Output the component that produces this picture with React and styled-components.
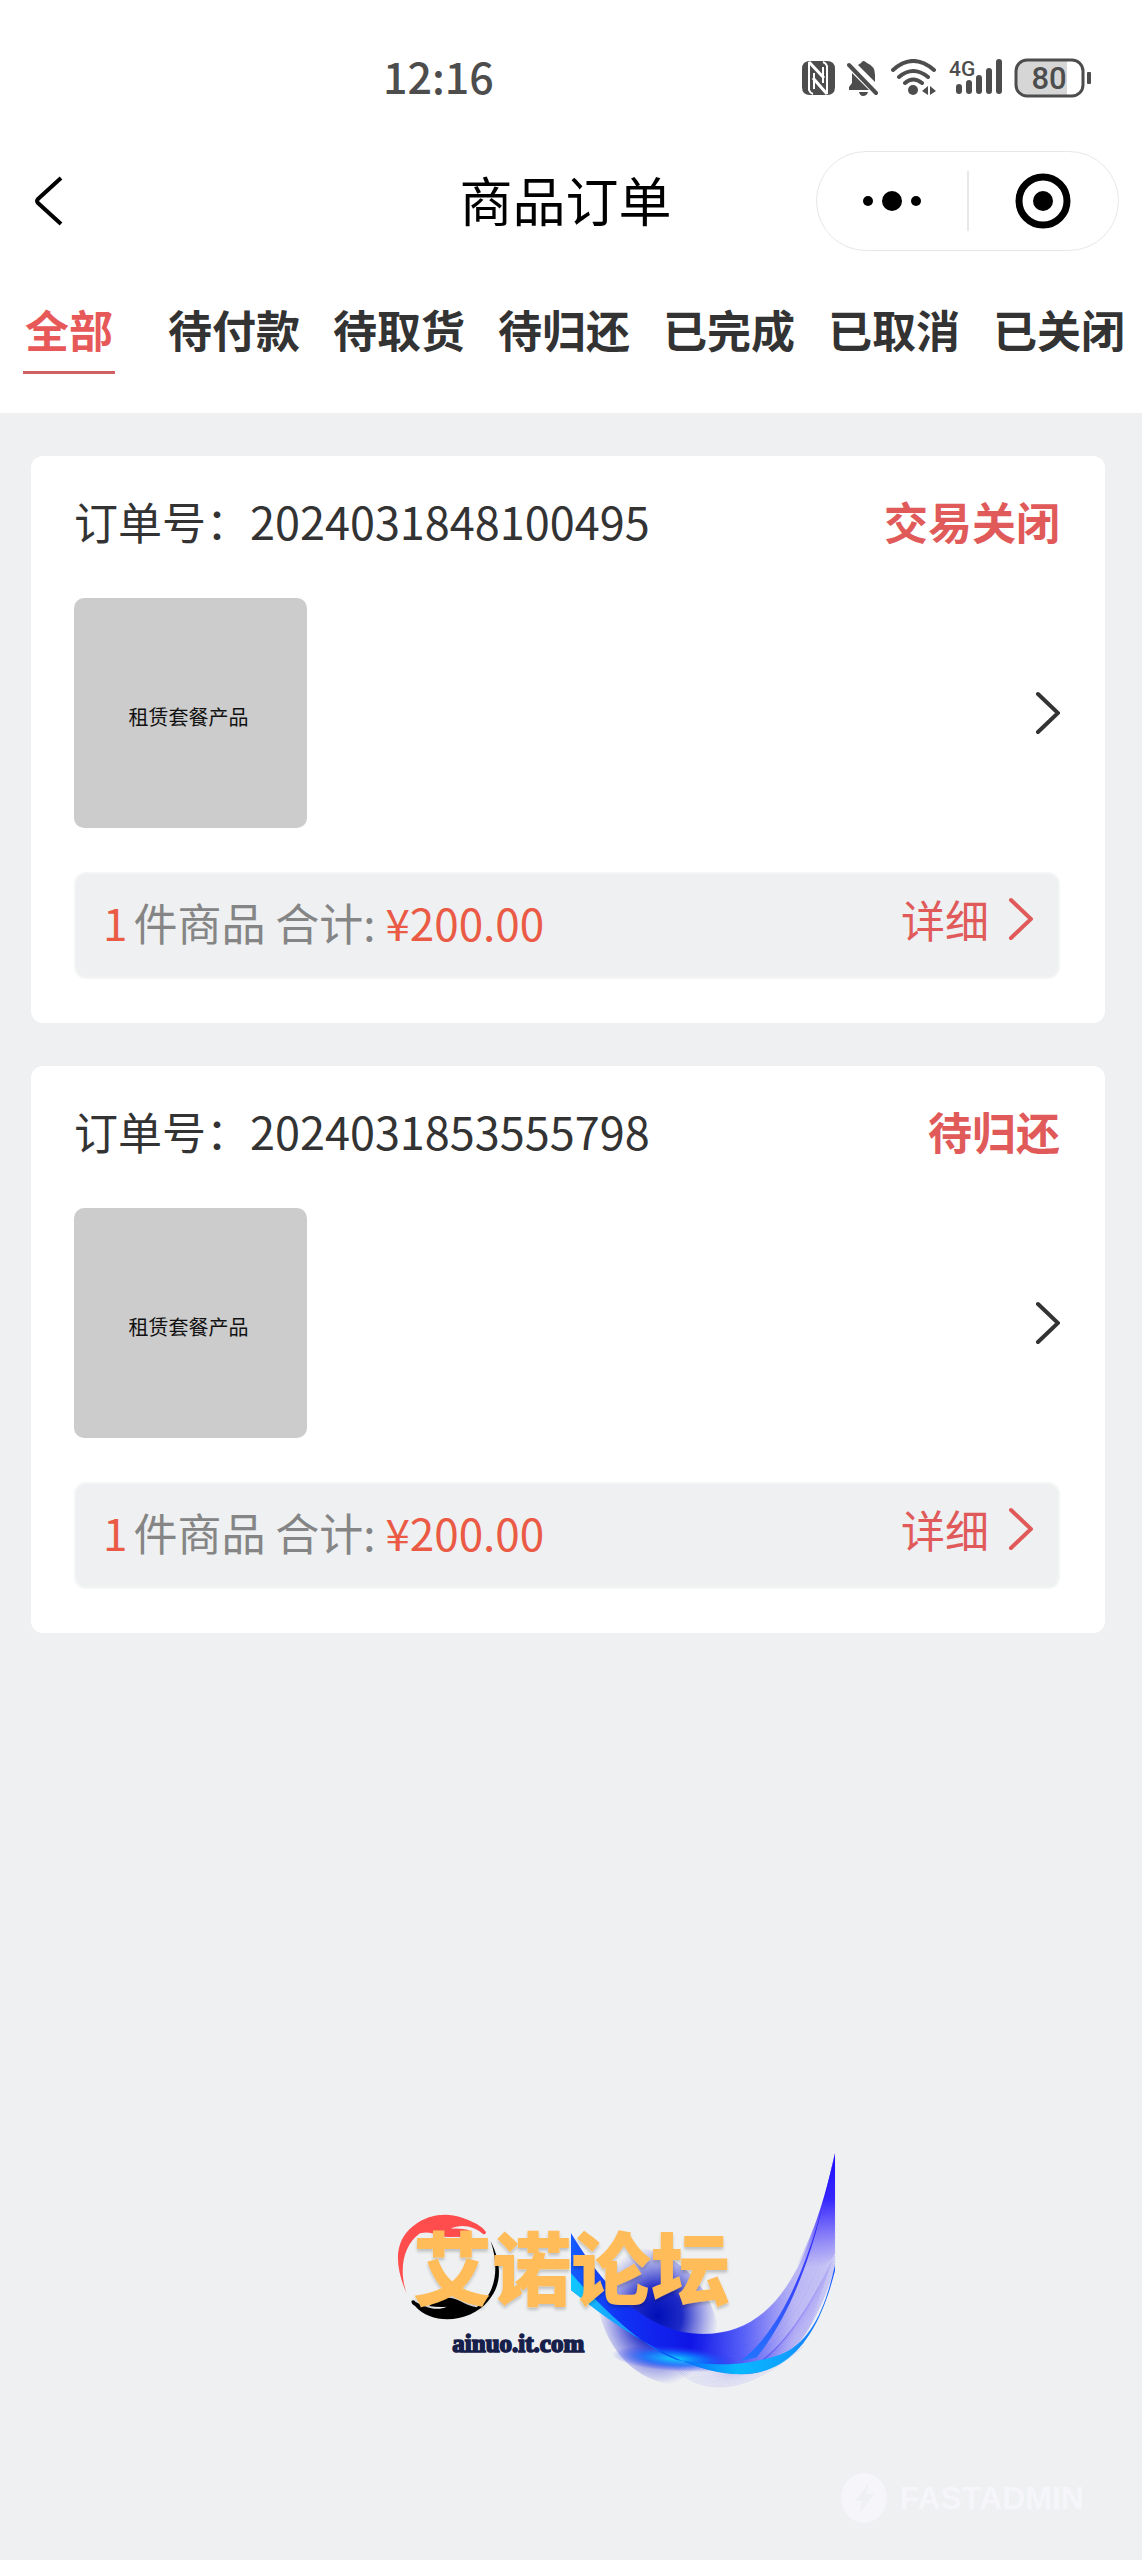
import { Fragment } from "react"
import styled, { createGlobalStyle } from "styled-components"

const GlobalStyle = createGlobalStyle`
    *{
        box-sizing: border-box;
    }
    body{
        margin: 0;
        background-color: #eef0f2;
        color: #333333;
        font-family: "Noto Sans CJK SC", "Noto Sans", sans-serif;
    }
    button{
        padding: 0;
        border: none;
        background: none;
        color: inherit;
        font: inherit;
        cursor: pointer;
    }
`
const Page = styled.div`
    display: flex;
    flex-direction: column;
    min-height: 100vh;
`
const Header = styled.header`
    background-color: #ffffff;
    border-bottom: 2px solid #f0f0f1;
`
const StatusBar = styled.div`
    display: flex;
    align-items: center;
    justify-content: space-between;
    height: 151px;
    padding: 4px 50px 0 383px;
    color: #4d4d4d;
`
const Time = styled.time`
    padding-bottom: 6px;
    font-size: 43px;
    line-height: 50px;
    font-weight: 500;
`
const StatusIcons = styled.div`
    display: flex;
    align-items: center;
    gap: 12px;
`
const NavBar = styled.div`
    display: grid;
    grid-template-columns: 1fr auto 1fr;
    align-items: center;
    padding: 0 23px 0 12px;
`
const BackButton = styled.button`
    display: flex;
    justify-self: start;
    padding: 0 20px;
`
const Title = styled.h1`
    margin: 0;
    padding-bottom: 4px;
    font-size: 53px;
    line-height: 60px;
    font-weight: 400;
    color: #000000;
`
const Capsule = styled.div`
    display: flex;
    align-items: center;
    justify-self: end;
    width: 303px;
    height: 100px;
    border: 1px solid #e6e8e8;
    border-radius: 50px;
`
const CapsuleButton = styled.button`
    display: flex;
    flex: 1;
    align-items: center;
    justify-content: center;
    height: 60px;
    & + &{
        border-left: 2px solid #e8e8e8;
    }
`
const Tabs = styled.nav`
    display: flex;
    gap: 33px;
    padding: 53px 16px 39px 23px;
    overflow: hidden;
`
const Tab = styled.button`
    flex: none;
    padding: 0 ${props => props.$active ? "2px" : "0"} 17px;
    margin-right: ${props => props.$active ? "20px" : "0"};
    border-bottom: 3px solid ${props => props.$active ? "#cf6163" : "transparent"};
    color: ${props => props.$active ? "#e75959" : "#333333"};
    font-size: 44px;
    line-height: 50px;
    font-weight: 700;
`
const Orders = styled.main`
    display: flex;
    flex-direction: column;
    gap: 43px;
    padding: 41px 37px 0 31px;
`
const Card = styled.article`
    padding: 40px 45px 44px 43px;
    background-color: #ffffff;
    border-radius: 12px;
`
const CardHead = styled.div`
    display: flex;
    justify-content: space-between;
    margin-bottom: 52px;
    font-size: 44px;
    line-height: 50px;
`
const OrderNumber = styled.span`
    font-size: 45px;
`
const State = styled.strong`
    color: #e05a5a;
    font-weight: 700;
`
const Product = styled.button`
    display: flex;
    align-items: center;
    justify-content: space-between;
    width: 100%;
    margin-bottom: 44px;
`
const Thumb = styled.span`
    display: flex;
    align-items: center;
    justify-content: center;
    width: 233px;
    height: 230px;
    padding: 8px 4px 0 0;
    border-radius: 10px;
    background-color: #cccccc;
    color: #111111;
    font-size: 20px;
    line-height: 24px;
`
const Summary = styled.div`
    display: flex;
    align-items: center;
    justify-content: space-between;
    height: 107px;
    padding: 0 25px 8px 27px;
    border: 2px solid #f4f6f6;
    border-radius: 12px;
    background-color: #eef0f2;
    color: #858585;
    font-size: 44px;
    line-height: 50px;
`
const Accent = styled.span`
    margin-right: ${props => props.$spaced ? "6px" : "0"};
    color: #ea5a44;
`
const Detail = styled.a`
    display: flex;
    align-items: center;
    gap: 18px;
    padding-bottom: 6px;
    color: #e05a5a;
    text-decoration: none;
`
const Footer = styled.footer`
    display: flex;
    flex: 1;
    flex-direction: column;
    justify-content: flex-end;
    padding: 80px 58px 36px;
`
const Forum = styled.div`
    display: flex;
    justify-content: center;
    padding-left: 98px;
    margin-bottom: 62px;
`
const Watermark = styled.div`
    display: flex;
    align-items: center;
    justify-content: flex-end;
    gap: 12px;
    color: #f5f5fa;
    font-family: "Liberation Sans", Arial, sans-serif;
    font-size: 32px;
    line-height: 52px;
    font-weight: 700;
`

const tabs = ["全部", "待付款", "待取货", "待归还", "已完成", "已取消", "已关闭"]

const orders = [
    { number: "2024031848100495", state: "交易关闭" },
    { number: "2024031853555798", state: "待归还" },
]

const Chevron = () => (
    <svg width="26" height="44" viewBox="0 0 26 44" fill="none" stroke="currentColor" strokeWidth="4" aria-hidden="true">
        <path d="M4 3 24 22 4 41" strokeLinecap="round"/>
    </svg>
)

const NfcIcon = () => (
    <svg width="33" height="34" viewBox="0 0 33 34" aria-label="NFC">
        <path fill="#4d4d4d" d="M8 0H25Q33 0 33 8V26Q33 34 25 34H8Q0 34 0 26V8Q0 0 8 0Z"/>
        <path fill="none" stroke="#fff" strokeWidth="2" d="M7 1V29Q8 32 11 33M25 33V5Q24 2 21 1"/>
        <path fill="none" stroke="#fff" strokeWidth="3" d="M7 1 22 17M11 17 25 33"/>
        <path fill="none" stroke="#fff" strokeWidth="2" d="M12 12V28M21 6V22"/>
    </svg>
)

const MutedIcon = () => (
    <svg width="32" height="36" viewBox="0 0 32 36" fill="#4d4d4d" aria-label="静音">
        <path d="M5 13 22 30H2V27L5 23ZM11 5 14 3Q16-1 20 3 28 6 28 15V22ZM12 32H21Q20 36 16 36 13 36 12 32Z"/>
        <path fill="none" stroke="#4d4d4d" strokeWidth="4" strokeLinecap="round" d="M2 5 29 33"/>
    </svg>
)

const WifiIcon = () => (
    <svg width="46" height="37" viewBox="0 0 46 37" fill="none" stroke="#4d4d4d" strokeWidth="4" strokeLinecap="round" aria-label="Wi-Fi">
        <path d="M2 11Q22-7 43 11M8 18Q22 6 37 18M14 24Q22 17 31 24"/>
        <circle cx="22" cy="31" r="5" fill="#4d4d4d" stroke="none"/>
        <path fill="#4d4d4d" stroke="none" d="M37 27V36L31 32ZM39 27V36L45 32Z"/>
    </svg>
)

const SignalIcon = () => (
    <svg width="53" height="44" viewBox="0 0 53 44" fill="none" stroke="#4d4d4d" strokeWidth="6" strokeLinecap="round" aria-label="4G">
        <path d="M10 31V35M20 27V35M30 22V35M40 15V35M50 6V35"/>
        <text x="0" y="20" fill="#4d4d4d" stroke="none" fontFamily="Roboto, sans-serif" fontSize="21" fontWeight="500">4G</text>
    </svg>
)

const BatteryIcon = () => (
    <svg width="78" height="40" viewBox="0 0 78 40" aria-label="80%">
        <path fill="#d6d6d6" d="M12 3H53V37H12Q3 37 3 28V12Q3 3 12 3Z"/>
        <rect x="2" y="2" width="67" height="36" rx="11" fill="none" stroke="#4d4d4d" strokeWidth="3"/>
        <rect x="73" y="14" width="4" height="12" rx="1" fill="#4d4d4d"/>
        <text x="35" y="31" textAnchor="middle" fill="#4d4d4d" fontFamily="Roboto, sans-serif" fontSize="31" fontWeight="500">80</text>
    </svg>
)

// strands of the ribbon, spread between its upper and lower edges
const strands = Array.from({ length: 44 }, (_, i) => {
    const t = i / 43
    const mix = (a, b) => Math.round(a + (b - a) * t)
    return `M573 ${mix(310, 480)}C${mix(700, 730)} ${mix(520, 600)} ${mix(830, 900)} ${mix(612, 730)} ${mix(970, 1090)} ${mix(612, 732)}C${mix(1180, 1250)} ${mix(612, 735)} ${mix(1290, 1330)} ${mix(420, 520)} 1365 ${mix(70, 410)}`
})

const veil = Array.from({ length: 22 }, (_, i) => (
    `M${860 + i * 8} ${690 + i}Q${1010 + i * 7} ${870 - i * 4} ${1270 + i * 4} ${650 - i * 12}`
))

const ForumLogo = () => (
    <svg width="480" height="280" viewBox="0 0 1440 840" fill="none">
        <defs>
            <radialGradient id="ink">
                <stop offset="0" stopColor="#0010b8"/>
                <stop offset="0.4" stopColor="#0614c0" stopOpacity="0.9"/>
                <stop offset="1" stopColor="#3a38e0" stopOpacity="0"/>
            </radialGradient>
            <radialGradient id="glow">
                <stop offset="0" stopColor="#10d0ff"/>
                <stop offset="0.5" stopColor="#1070ff" stopOpacity="0.8"/>
                <stop offset="1" stopColor="#3030f0" stopOpacity="0"/>
            </radialGradient>
            <linearGradient id="ribbon" gradientUnits="userSpaceOnUse" x1="573" y1="400" x2="1365" y2="400">
                <stop offset="0" stopColor="#1068ff"/>
                <stop offset="0.2" stopColor="#0838f0"/>
                <stop offset="0.45" stopColor="#0814e0"/>
                <stop offset="0.65" stopColor="#1c30f8" stopOpacity="0.7"/>
                <stop offset="0.85" stopColor="#2a18f8" stopOpacity="0.15"/>
                <stop offset="1" stopColor="#2010ff" stopOpacity="0"/>
            </linearGradient>
            <linearGradient id="tip" gradientUnits="userSpaceOnUse" x1="1340" y1="70" x2="1340" y2="410">
                <stop offset="0" stopColor="#1808ff"/>
                <stop offset="0.4" stopColor="#2414ff" stopOpacity="0.9"/>
                <stop offset="1" stopColor="#4030f8" stopOpacity="0"/>
            </linearGradient>
            <linearGradient id="fold" gradientUnits="userSpaceOnUse" x1="1090" y1="690" x2="1340" y2="200">
                <stop offset="0" stopColor="#1078ff"/>
                <stop offset="0.5" stopColor="#1828ff"/>
                <stop offset="1" stopColor="#1808ff"/>
            </linearGradient>
            <linearGradient id="edge" gradientUnits="userSpaceOnUse" x1="573" y1="450" x2="1365" y2="450">
                <stop offset="0" stopColor="#10c8ff"/>
                <stop offset="0.22" stopColor="#1898ff"/>
                <stop offset="0.35" stopColor="#0850f8"/>
                <stop offset="0.63" stopColor="#08b8ff"/>
                <stop offset="0.82" stopColor="#10a0ff"/>
                <stop offset="1" stopColor="#1858ff"/>
            </linearGradient>
            <filter id="shade" x="-10%" y="-10%" width="120%" height="130%">
                <feDropShadow dx="0" dy="8" stdDeviation="5" floodColor="#000" floodOpacity="0.2"/>
            </filter>
        </defs>
        <path fill="url(#ink)" d="M660 350C880 320 1000 470 1016 612L980 762C820 790 690 710 650 520Z"/>
        <path stroke="#6858f0" strokeOpacity="0.22" strokeWidth="2" d={veil.join("")}/>
        <path fill="url(#ribbon)" d="M573 310C700 520 830 612 970 612C1180 612 1290 420 1365 70V410C1330 520 1250 735 1090 732C900 730 730 600 573 480Z"/>
        <path fill="url(#tip)" d="M1365 70C1330 230 1290 340 1230 440L1310 420Q1350 400 1365 370Z"/>
        <path stroke="#3020ff" strokeOpacity="0.24" strokeWidth="2" d={strands.join("")}/>
        <path fill="url(#fold)" fillOpacity="0.8" d="M1365 70C1310 340 1220 590 1080 694L1130 682C1230 560 1290 380 1320 260Z"/>
        <ellipse cx="885" cy="686" rx="190" ry="38" transform="rotate(4 885 686)" fill="url(#glow)"/>
        <path fill="url(#edge)" d="M573 430C680 550 790 650 890 690C1040 715 1120 700 1200 674C1290 640 1335 540 1365 405V422C1330 560 1280 654 1200 702C1150 730 1110 734 1060 732C930 725 740 620 573 480Z"/>
        <path fill="#ff4d4d" d="M80 490C40 400 45 330 100 288C145 250 205 248 242 262Q300 280 318 306 318 314 310 313C285 290 245 280 212 296Q245 294 265 300 280 308 270 320L205 321C175 320 155 300 120 310C70 345 55 420 80 490Z"/>
        <path fill="#000" d="M332 334C370 410 362 470 325 512C275 575 160 590 105 528Q92 522 95 512 101 508 106 515C130 530 170 545 200 530Q175 532 148 528 165 505 205 503C240 505 250 525 290 532C350 490 358 410 332 334Z"/>
        <text x="98" y="508" fill="#ffbc58" filter="url(#shade)" fontFamily="Noto Sans CJK SC, sans-serif" fontSize="238" fontWeight="900">艾诺论坛</text>
        <text x="217" y="667" fill="#17204a" stroke="#17204a" strokeWidth="5" fontFamily="Liberation Serif, serif" fontSize="75" fontWeight="700">ainuo.it.com</text>
    </svg>
)

const OrderCard = ({ number, state }) => (
    <Card>
        <CardHead>
            <span>订单号：<OrderNumber>{number}</OrderNumber></span>
            <State>{state}</State>
        </CardHead>
        <Product>
            <Thumb>租赁套餐产品</Thumb>
            <Chevron/>
        </Product>
        <Summary>
            <span><Accent $spaced>1</Accent>件商品 合计: <Accent>¥200.00</Accent></span>
            <Detail href="#detail">详细<Chevron/></Detail>
        </Summary>
    </Card>
)

const App = () => {
    return(
        <Fragment>
            <GlobalStyle/>
            <Page>
                <Header>
                    <StatusBar>
                        <Time>12:16</Time>
                        <StatusIcons>
                            <NfcIcon/>
                            <MutedIcon/>
                            <WifiIcon/>
                            <SignalIcon/>
                            <BatteryIcon/>
                        </StatusIcons>
                    </StatusBar>
                    <NavBar>
                        <BackButton aria-label="返回">
                            <svg width="34" height="50" viewBox="0 0 34 50" fill="none" stroke="#000" strokeWidth="4">
                                <path d="M29 2 6 23Q4 25 6 27L29 48"/>
                            </svg>
                        </BackButton>
                        <Title>商品订单</Title>
                        <Capsule>
                            <CapsuleButton aria-label="更多">
                                <svg width="60" height="20" viewBox="0 0 60 20">
                                    <circle cx="6" cy="10" r="5"/>
                                    <circle cx="30" cy="10" r="10"/>
                                    <circle cx="54" cy="10" r="5"/>
                                </svg>
                            </CapsuleButton>
                            <CapsuleButton aria-label="关闭">
                                <svg width="56" height="56" viewBox="0 0 56 56">
                                    <circle cx="28" cy="28" r="24" fill="none" stroke="#000" strokeWidth="7"/>
                                    <circle cx="28" cy="28" r="10"/>
                                </svg>
                            </CapsuleButton>
                        </Capsule>
                    </NavBar>
                    <Tabs>
                        {tabs.map((tab, i) => <Tab key={tab} $active={i === 0}>{tab}</Tab>)}
                    </Tabs>
                </Header>
                <Orders>
                    {orders.map(order => <OrderCard key={order.number} {...order}/>)}
                </Orders>
                <Footer>
                    <Forum><ForumLogo/></Forum>
                    <Watermark>
                        <svg width="48" height="52" viewBox="0 0 48 52">
                            <ellipse cx="24" cy="26" rx="23" ry="25" fill="currentColor"/>
                            <path fill="#eef0f2" d="M29 11 15 29H22L20 41 34 22H26Z"/>
                        </svg>
                        FASTADMIN
                    </Watermark>
                </Footer>
            </Page>
        </Fragment>
    );
}

export default App;
